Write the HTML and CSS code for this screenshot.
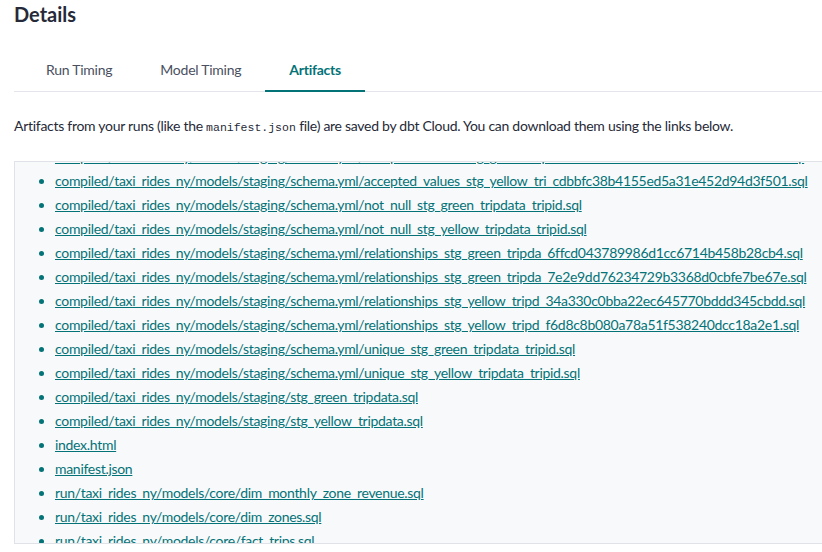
FILE: index.html
```html
<!DOCTYPE html>
<html>
<head>
<meta charset="utf-8">
<link rel="stylesheet" href="styles.css">
</head>
<body>
<div class="page">
  <h2 class="title">Details</h2>
  <nav class="tabs">
    <a class="tab">Run Timing</a>
    <a class="tab">Model Timing</a>
    <a class="tab active">Artifacts</a>
  </nav>
  <p class="desc">Artifacts from your runs (like the <code>manifest.json</code> file) are saved by dbt Cloud. You can download them using the links below.</p>
  <div class="artifacts" id="artifacts">
    <ul class="list">
      <li><a href="#">compiled/taxi_rides_ny/models/staging/schema.yml/accepted_values_stg_green_trip_6bd9fd0f36ddad9308e094d2f6390f4f.sql</a></li>
      <li><a href="#">compiled/taxi_rides_ny/models/staging/schema.yml/accepted_values_stg_yellow_tri_cdbbfc38b4155ed5a31e452d94d3f501.sql</a></li>
      <li><a href="#">compiled/taxi_rides_ny/models/staging/schema.yml/not_null_stg_green_tripdata_tripid.sql</a></li>
      <li><a href="#">compiled/taxi_rides_ny/models/staging/schema.yml/not_null_stg_yellow_tripdata_tripid.sql</a></li>
      <li><a href="#">compiled/taxi_rides_ny/models/staging/schema.yml/relationships_stg_green_tripda_6ffcd043789986d1cc6714b458b28cb4.sql</a></li>
      <li><a href="#">compiled/taxi_rides_ny/models/staging/schema.yml/relationships_stg_green_tripda_7e2e9dd76234729b3368d0cbfe7be67e.sql</a></li>
      <li><a href="#">compiled/taxi_rides_ny/models/staging/schema.yml/relationships_stg_yellow_tripd_34a330c0bba22ec645770bddd345cbdd.sql</a></li>
      <li><a href="#">compiled/taxi_rides_ny/models/staging/schema.yml/relationships_stg_yellow_tripd_f6d8c8b080a78a51f538240dcc18a2e1.sql</a></li>
      <li><a href="#">compiled/taxi_rides_ny/models/staging/schema.yml/unique_stg_green_tripdata_tripid.sql</a></li>
      <li><a href="#">compiled/taxi_rides_ny/models/staging/schema.yml/unique_stg_yellow_tripdata_tripid.sql</a></li>
      <li><a href="#">compiled/taxi_rides_ny/models/staging/stg_green_tripdata.sql</a></li>
      <li><a href="#">compiled/taxi_rides_ny/models/staging/stg_yellow_tripdata.sql</a></li>
      <li><a href="#">index.html</a></li>
      <li><a href="#">manifest.json</a></li>
      <li><a href="#">run/taxi_rides_ny/models/core/dim_monthly_zone_revenue.sql</a></li>
      <li><a href="#">run/taxi_rides_ny/models/core/dim_zones.sql</a></li>
      <li><a href="#">run/taxi_rides_ny/models/core/fact_trips.sql</a></li>
      <li><a href="#">run/taxi_rides_ny/models/staging/stg_green_tripdata.sql</a></li>
      <li><a href="#">run/taxi_rides_ny/models/staging/stg_yellow_tripdata.sql</a></li>
    </ul>
  </div>
</div>
<script src="app.js"></script>
</body>
</html>
```
FILE: styles.css
```css
html, body {
  margin: 0;
  padding: 0;
  background: #ffffff;
  overflow: hidden;
}
body {
  font-family: Lato, "Noto Sans", sans-serif;
  color: #262a38;
  width: 822px;
  height: 552px;
}
.page {
  width: 830px;
  padding-left: 14px;
}
.title {
  margin: 0;
  padding-top: 2px;
  height: 28px;
  font-size: 20px;
  font-weight: 700;
  line-height: 24px;
  color: #262a38;
}
.tabs {
  display: flex;
  margin-top: 28px;
  padding-left: 8px;
  border-bottom: 1px solid #e3e5ea;
  height: 33px;
}
.tab {
  padding: 0 24px;
  font-size: 14px;
  letter-spacing: -0.25px;
  line-height: 23px;
  color: #4a5060;
  border-bottom: 2px solid transparent;
  margin-bottom: -1px;
}
.tab.active {
  color: #047377;
  font-weight: 700;
  border-bottom-color: #047377;
}
.desc {
  margin: 0;
  padding-top: 24px;
  font-size: 14px;
  letter-spacing: -0.28px;
  line-height: 20px;
  color: #262a38;
  height: 45px;
}
.desc code {
  font-family: "Liberation Mono", monospace;
  font-size: 11.5px;
  letter-spacing: 0;
}
.artifacts {
  height: 381px;
  border: 1px solid #dfe3e8;
  border-right: none;
  background: #f8f9fb;
  overflow: hidden;
}
.list {
  margin: 0;
  padding: 0 0 0 40px;
  list-style: disc;
}
.list li {
  font-size: 14px;
  letter-spacing: -0.3px;
  line-height: 24px;
  color: #047377;
}
.list a {
  color: #047377;
  text-decoration: underline;
}
```
FILE: app.js
```js
document.getElementById('artifacts').scrollTop = 17;
```
